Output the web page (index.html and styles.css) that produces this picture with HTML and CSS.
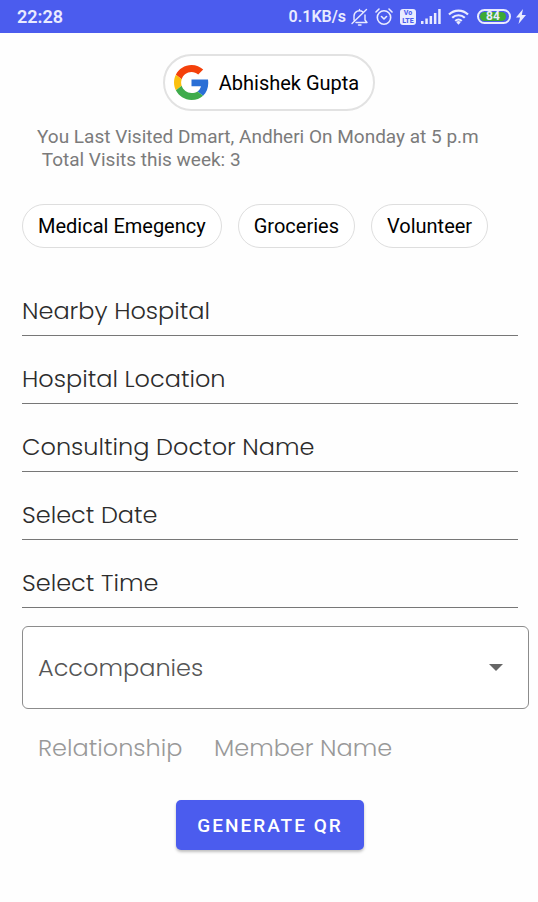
FILE: index.html
```html
<!DOCTYPE html>
<html lang="en">
<head>
<meta charset="utf-8">
<meta name="viewport" content="width=device-width, initial-scale=1">
<title>Visit pass</title>
<link rel="stylesheet" href="styles.css">
</head>
<body>
<header class="status">
  <span class="clock">22:28</span>
  <div class="indicators">
    <span class="speed">0.1KB/s</span>
    <svg class="bell" width="17" height="18" viewBox="0 0 17 18" fill="none" stroke="currentColor" stroke-width="1.4" stroke-linecap="round" stroke-linejoin="round"><path d="M3 12V8a5.500 5.500 0 0 1 9-4M14 7v5l2 2.500H5M1 15.500 15.500 1.500M8.500 2.500V1.500M7.500 17h2.500"/></svg>
    <svg class="alarm" width="18" height="18" viewBox="0 0 18 18" fill="none" stroke="currentColor" stroke-width="1.600" stroke-linecap="round" stroke-linejoin="round"><circle cx="9" cy="9.500" r="6.700"/><path d="m1 4 3-3M17 4l-3-3M6.500 8.500 9 11l2.500-2.500"/></svg>
    <span class="volte"><span>Vo</span><span>LTE</span></span>
    <svg class="signal" width="20" height="15" viewBox="0 0 20 15" fill="currentColor"><path d="M0 12h2.500v3H0zM4.300 9.500h2.500V15H4.300zM8.600 7h2.500v8H8.600zM12.900 4h2.500v11h-2.500zM17.200 0h2.500v15h-2.500z"/></svg>
    <svg class="wifi" width="21" height="16" viewBox="0 0 21 16" fill="none" stroke="currentColor" stroke-width="2.200"><path d="M1 5.500a13.500 13.500 0 0 1 19 0M4.200 8.800a9 9 0 0 1 12.600 0M7.300 12a4.600 4.600 0 0 1 6.400 0"/><path d="m8.300 13.300 2.200 2.400 2.200-2.400a3 3 0 0 0-4.400 0z" fill="currentColor" stroke="none"/></svg>
    <span class="battery"><span class="level">84</span></span>
    <svg class="bolt" width="10" height="15" viewBox="0 0 10 15" fill="currentColor"><path d="M7 0 0 8.500h4L2.500 15 10 6H5.800z"/></svg>
  </div>
</header>
<main class="page">
  <button class="account" type="button">
    <svg width="35" height="35" viewBox="0 0 48 48"><path fill="#f4410b" d="M24 9.500c3.540 0 6.710 1.220 9.210 3.600l6.850-6.850C35.900 2.380 30.470 0 24 0 14.620 0 6.510 5.380 2.560 13.220l7.980 6.190C12.430 13.720 17.740 9.500 24 9.500z"/><path fill="#2a6fd6" d="M46.980 24.550c0-1.570-.15-3.090-.38-4.550H24v9.020h12.940c-.58 2.960-2.260 5.480-4.780 7.180l7.730 6c4.510-4.180 7.090-10.360 7.090-17.650z"/><path fill="#fbc00f" d="M10.530 28.590c-.48-1.450-.76-2.990-.76-4.590s.27-3.140.76-4.590l-7.980-6.190C.92 16.460 0 20.120 0 24s.92 7.540 2.560 10.780z"/><path fill="#3fab4c" d="M24 48c6.480 0 11.930-2.130 15.890-5.810l-7.730-6c-2.150 1.450-4.920 2.300-8.160 2.300-6.260 0-11.570-4.220-13.470-9.910l-7.980 6.190C6.510 42.620 14.620 48 24 48z"/></svg>
    <span>Abhishek Gupta</span>
  </button>
  <div class="summary">
    <p>You Last Visited Dmart, Andheri On Monday at 5 p.m</p>
    <p>&nbsp;Total Visits this week: 3</p>
  </div>
  <nav class="chips" aria-label="Visit reason">
    <button type="button">Medical Emegency</button>
    <button type="button">Groceries</button>
    <button type="button">Volunteer</button>
  </nav>
  <form class="form">
    <div class="fields">
      <input type="text" aria-label="Nearby Hospital" placeholder="Nearby Hospital">
      <input type="text" aria-label="Hospital Location" placeholder="Hospital Location">
      <input type="text" aria-label="Consulting Doctor Name" placeholder="Consulting Doctor Name">
      <input type="text" aria-label="Select Date" placeholder="Select Date">
      <input type="text" aria-label="Select Time" placeholder="Select Time">
    </div>
    <div class="picker">
      <select aria-label="Accompanies"><option>Accompanies</option></select>
      <svg class="caret" width="14" height="7" viewBox="0 0 14 7" fill="#666"><path d="M0 0h14L7 7z"/></svg>
    </div>
    <div class="member">
      <input type="text" aria-label="Relationship" placeholder="Relationship">
      <input type="text" aria-label="Member Name" placeholder="Member Name">
    </div>
    <button class="submit" type="button">GENERATE QR</button>
  </form>
</main>
</body>
</html>
```
FILE: styles.css
```css
* { box-sizing: border-box; }
body {
  margin: 0;
  background: #fefefe;
  font-family: Roboto, "Liberation Sans", sans-serif;
  font-size: 20px;
  color: #000;
}
button, input, select { font: inherit; color: inherit; margin: 0; }
.status {
  display: flex;
  align-items: center;
  justify-content: space-between;
  height: 33px;
  padding: 0 12px 0 17px;
  background: #4b5cee;
  color: #e9ebff;
}
.clock { font-size: 18px; font-weight: 600; }
.indicators { display: flex; align-items: center; gap: 5px; }
.speed { font-size: 16px; font-weight: 600; }
.alarm { margin: 0 2px; }
.volte {
  display: flex;
  flex-direction: column;
  align-items: center;
  justify-content: center;
  width: 16px;
  height: 16px;
  border-radius: 3px;
  background: #e9ebff;
  color: #4b5cee;
  font-size: 7px;
  line-height: 8px;
  font-weight: 800;
}
.wifi { margin: 0 3px 0 2px; }
.battery {
  width: 34px;
  height: 15px;
  padding: 1px;
  border: 2px solid #e9ebff;
  border-radius: 8px;
}
.level {
  display: block;
  width: 26px;
  height: 9px;
  border-radius: 5px;
  background: #3da935;
  font-size: 12px;
  line-height: 9px;
  font-weight: 700;
  text-align: center;
}
.page { display: flex; flex-direction: column; }
.account {
  align-self: center;
  display: flex;
  align-items: center;
  gap: 10px;
  height: 57px;
  margin-top: 21px;
  padding: 0 14px 0 9px;
  border: 2px solid #e2e2e2;
  border-radius: 29px;
  background: #fff;
}
.summary { margin: 14px 37px 0; color: #7b7b7b; font-size: 19px; line-height: 23px; }
.summary p { margin: 0; }
.chips { display: flex; gap: 16px; margin: 33px 22px 0; }
.chips button {
  height: 44px;
  padding: 0 15px;
  border: 1px solid #dedede;
  border-radius: 22px;
  background: #fff;
  white-space: nowrap;
}
.form {
  display: flex;
  flex-direction: column;
  margin: 20px 9px 0 22px;
  font-family: Poppins, Inter, sans-serif;
  font-size: 24px;
  font-weight: 300;
}
.form ::placeholder { color: inherit; opacity: 1; }
.fields { display: flex; flex-direction: column; margin-right: 11px; color: #2c2c2c; }
.fields input {
  width: 100%;
  height: 68px;
  padding: 18px 0 0;
  border: 0;
  border-bottom: 1px solid #777;
  background: none;
}
.picker { position: relative; margin-top: 18px; color: #555; }
.picker select {
  display: block;
  width: 100%;
  height: 83px;
  padding: 0 15px;
  border: 1px solid #8c8c8c;
  border-radius: 6px;
  appearance: none;
  background: #fff;
}
.caret { position: absolute; right: 26px; top: 38px; pointer-events: none; }
.member { display: flex; gap: 16px; margin: 18px 16px 0; color: #999; }
.member input {
  width: 160px;
  height: 40px;
  padding: 0;
  border: 0;
  background: none;
}
.member input + input { flex: 1; min-width: 0; }
.submit {
  align-self: center;
  height: 50px;
  margin: 33px 11px 48px 0;
  padding: 0 21px;
  border: 0;
  border-radius: 5px;
  background: #4b5cee;
  box-shadow: 0 2px 3px rgba(0, 0, 0, .25);
  color: #fff;
  font-family: Roboto, sans-serif;
  font-size: 19px;
  font-weight: 500;
  letter-spacing: 2px;
}
```
